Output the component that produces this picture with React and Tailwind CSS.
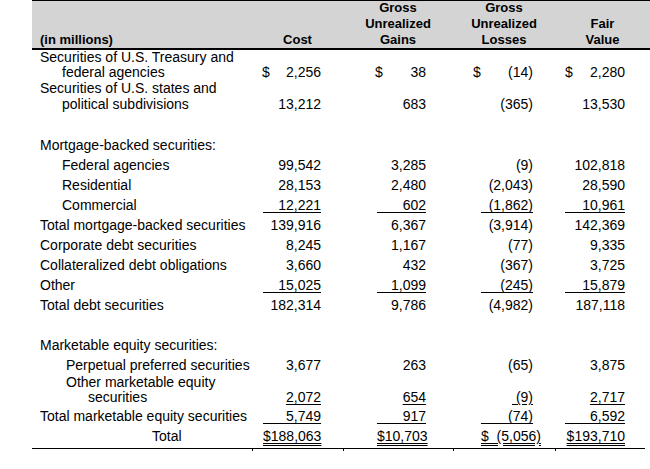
const COLS = 'grid grid-cols-[220px_91px_110px_102px_90px]'

const cols = [
  { pad: 'pl-[11px] pr-[22px]', dollar: '-ml-px' },
  { pad: 'pl-[34px] pr-[27px]', dollar: '-ml-[2px]' },
  { pad: 'pl-[28px] pr-[22px]', dollar: '-ml-[8px]' },
  { pad: 'pl-[10px] pr-[20px]', dollar: '' },
]

function Row({ h = 'h-[20px]', label, indent = 'pl-2', vals, dollar, mark, valTop = 'pt-[3px]', lh = 'leading-[14px]' }) {
  return (
    <div className={`${COLS} ${h}`}>
      {typeof label === 'string' ? (
        <div className={`pt-[3px] leading-[14px] whitespace-nowrap ${indent}`}>{label}</div>
      ) : (
        <div className="whitespace-nowrap">{label}</div>
      )}
      {vals &&
        vals.map((v, i) => (
          <div key={i} className={`${cols[i].pad} ${valTop}`}>
            <div className={`flex whitespace-pre ${lh} ${mark === 'box' ? 'border-b border-black' : ''}`}>
              {dollar && <span className={cols[i].dollar}>$</span>}
              <span
                className={`ml-auto ${mark === 'text' ? 'underline underline-offset-2' : ''} ${
                  mark === 'double' ? 'underline decoration-double underline-offset-2' : ''
                }`}
              >
                {v}
              </span>
            </div>
          </div>
        ))}
    </div>
  )
}

export default function App() {
  return (
    <div className="w-[650px] h-[469px] bg-white text-black text-[14px] font-['Liberation_Sans',Arial,sans-serif] overflow-hidden">
      {/* header band */}
      <div className="ml-[32px] w-[618px] bg-[#d4d4d4] shadow-[inset_0_1px_0_#000] border-b-2 border-black grid grid-cols-[220px_91px_110px_102px_95px] text-[13px] font-bold leading-4">
        <div className="pl-2 pt-8">(in millions)</div>
        <div className="pt-8 text-center">Cost</div>
        <div className="text-center">
          Gross
          <br />
          Unrealized
          <br />
          Gains
        </div>
        <div className="text-center">
          Gross
          <br />
          Unrealized
          <br />
          Losses
        </div>
        <div className="pt-4 text-center">
          Fair
          <br />
          Value
        </div>
      </div>

      <div className="ml-[32px] w-[613px] border-b border-black">
        <Row
          h="h-[30px]"
          label={
            <div className="leading-[15px]">
              <div className="pl-2">Securities of U.S. Treasury and</div>
              <div className="pl-[30px]">federal agencies</div>
            </div>
          }
          vals={['2,256', '38', '(14)', '2,280']}
          dollar
          valTop="pt-[15px]"
          lh="leading-[15px]"
        />
        <Row
          h="h-[33px]"
          label={
            <div className="leading-4">
              <div className="pl-2">Securities of U.S. states and</div>
              <div className="pl-[30px]">political subdivisions</div>
            </div>
          }
          vals={['13,212', '683', '(365)', '13,530']}
          valTop="pt-4"
          lh="leading-4"
        />
        <div className="h-[22px]" />

        <Row label="Mortgage-backed securities:" />
        <Row label="Federal agencies" indent="pl-[30px]" vals={['99,542', '3,285', '(9)', '102,818']} />
        <Row label="Residential" indent="pl-[30px]" vals={['28,153', '2,480', '(2,043)', '28,590']} />
        <Row label="Commercial" indent="pl-[30px]" vals={['12,221', '602', '(1,862)', '10,961']} mark="box" />
        <Row label="Total mortgage-backed securities" vals={['139,916', '6,367', '(3,914)', '142,369']} />
        <Row label="Corporate debt securities" vals={['8,245', '1,167', '(77)', '9,335']} />
        <Row label="Collateralized debt obligations" vals={['3,660', '432', '(367)', '3,725']} />
        <Row label="Other" vals={['15,025', '1,099', '(245)', '15,879']} mark="box" />
        <Row label="Total debt securities" vals={['182,314', '9,786', '(4,982)', '187,118']} />
        <div className="h-[20px]" />

        <Row label="Marketable equity securities:" />
        <Row label="Perpetual preferred securities" indent="pl-[34px]" vals={['3,677', '263', '(65)', '3,875']} />
        <Row
          h="h-[31px]"
          label={
            <div className="leading-[15px]">
              <div className="pl-[34px]">Other marketable equity</div>
              <div className="pl-[56px]">securities</div>
            </div>
          }
          vals={['2,072', '654', ' (9)', '2,717']}
          mark="text"
          valTop="pt-[15px]"
          lh="leading-[15px]"
        />
        <Row label="Total marketable equity securities" vals={['5,749', '917', '(74)', '6,592']} mark="box" />
        <Row
          h="h-[22px]"
          label="Total"
          indent="pl-[120px]"
          vals={['$188,063', '$10,703', '$  (5,056)', '$193,710']}
          mark="double"
        />
      </div>
      <div className={`ml-[32px] w-[613px] h-[2px] ${COLS}`}>
        <div />
        <div className="border-l border-black" />
        <div className="border-l border-black" />
        <div className="border-l border-black" />
        <div className="border-l border-black" />
      </div>
    </div>
  )
}
